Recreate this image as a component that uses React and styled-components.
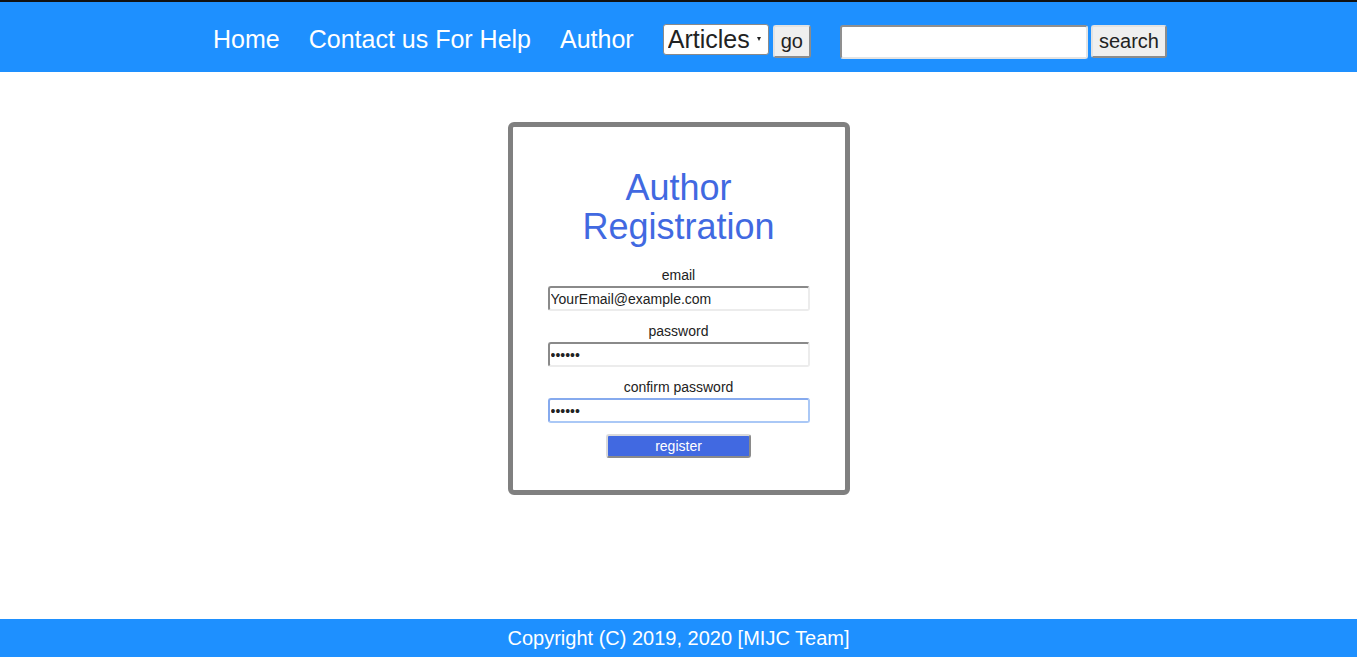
import React from "react";
import styled, { createGlobalStyle } from "styled-components";

const GlobalStyle = createGlobalStyle`
  html, body {
    margin: 0;
    padding: 0;
    background: #ffffff;
    font-family: "Liberation Sans", Arial, sans-serif;
  }
  * { box-sizing: border-box; }
`;

const Page = styled.div`
  min-height: 100vh;
  display: flex;
  flex-direction: column;
  border-top: 2px solid #111111;
`;

const NavBar = styled.nav`
  height: 70px;
  background: #1e90ff;
  display: flex;
  justify-content: center;
  align-items: baseline;
  gap: 29px;
  padding: 22px 0 0 23px;
`;

const NavLink = styled.a`
  color: #ffffff;
  font-size: 25px;
  text-decoration: none;
  cursor: pointer;
`;

const ControlGroup = styled.form`
  display: flex;
  align-items: baseline;
  gap: ${(p) => p.$gap}px;
  margin: 0;
`;

const SelectWrap = styled.span`
  position: relative;
  display: inline-block;
  &::after {
    content: "";
    position: absolute;
    right: 8px;
    top: 13px;
    border-left: 2.5px solid transparent;
    border-right: 2.5px solid transparent;
    border-top: 4px solid #222222;
    pointer-events: none;
  }
`;

const Select = styled.select`
  appearance: none;
  -webkit-appearance: none;
  width: 106px;
  height: 31px;
  padding: 0 16px 0 4px;
  border: 1px solid #8a8a8a;
  border-radius: 3px;
  background: #ffffff;
  color: #222222;
  font-family: inherit;
  font-size: 25px;
  line-height: 29px;
`;

const NavButton = styled.button`
  height: 33px;
  padding: 0 6px;
  background: #efefef;
  color: #222222;
  font-family: inherit;
  font-size: 20px;
  border: 2px solid;
  border-color: #e2e2e2 #8c8c8c #8c8c8c #e2e2e2;
  border-radius: 3px;
`;

const SearchInput = styled.input`
  width: 248px;
  height: 34px;
  border: 2px solid;
  border-color: #8f8f8f #e4e4e4 #e4e4e4 #8f8f8f;
  border-radius: 3px;
  background: #ffffff;
  font-family: inherit;
  font-size: 20px;
  padding: 0 2px;
`;

const Main = styled.main`
  flex: 1;
  display: flex;
  justify-content: center;
  align-items: flex-start;
  padding-top: 50px;
`;

const Card = styled.section`
  width: 342px;
  border: 5px solid #808080;
  border-radius: 6px;
  padding: 15px 35px 32px;
  text-align: center;
`;

const Title = styled.h1`
  margin: 26px 0 21px;
  font-size: 36px;
  line-height: 39px;
  font-weight: normal;
  color: #4169e1;
`;

const Form = styled.form`
  display: flex;
  flex-direction: column;
  margin: 0;
`;

const Field = styled.div`
  display: flex;
  flex-direction: column;
  & + & {
    margin-top: 12px;
  }
`;

const Label = styled.label`
  font-size: 14px;
  line-height: 16px;
  color: #222222;
  margin-bottom: 3px;
`;

const TextInput = styled.input`
  width: 100%;
  height: 25px;
  border: 2px solid;
  border-color: ${(p) =>
    p.$focused
      ? "#86aaee #aac8f6 #aac8f6 #86aaee"
      : "#8a8a8a #ececec #ececec #8a8a8a"};
  border-radius: 3px;
  background: #ffffff;
  color: #222222;
  font-family: inherit;
  font-size: 14px;
  padding: 0 1px;
  outline: none;
`;

const RegisterButton = styled.button`
  align-self: center;
  width: 145px;
  height: 24px;
  margin-top: 11px;
  background: #4169e1;
  color: #ffffff;
  font-family: inherit;
  font-size: 14px;
  border: 2px solid;
  border-color: #dadada #8a8a8a #8a8a8a #dadada;
  border-radius: 3px;
  padding: 0;
`;

const Footer = styled.footer`
  height: 38px;
  background: #1e90ff;
  color: #ffffff;
  font-size: 20px;
  display: flex;
  align-items: center;
  justify-content: center;
`;

export default function App() {
  return (
    <Page>
      <GlobalStyle />
      <NavBar>
        <NavLink>Home</NavLink>
        <NavLink>Contact us For Help</NavLink>
        <NavLink>Author</NavLink>
        <ControlGroup $gap={4} onSubmit={(e) => e.preventDefault()}>
          <SelectWrap>
            <Select defaultValue="articles">
              <option value="articles">Articles</option>
              <option value="authors">Authors</option>
            </Select>
          </SelectWrap>
          <NavButton type="submit">go</NavButton>
        </ControlGroup>
        <ControlGroup $gap={3} onSubmit={(e) => e.preventDefault()}>
          <SearchInput type="text" />
          <NavButton type="submit">search</NavButton>
        </ControlGroup>
      </NavBar>
      <Main>
        <Card>
          <Title>Author Registration</Title>
          <Form onSubmit={(e) => e.preventDefault()}>
            <Field>
              <Label htmlFor="email">email</Label>
              <TextInput id="email" type="text" defaultValue="YourEmail@example.com" />
            </Field>
            <Field>
              <Label htmlFor="password">password</Label>
              <TextInput id="password" type="password" defaultValue="123456" />
            </Field>
            <Field>
              <Label htmlFor="confirm">confirm password</Label>
              <TextInput id="confirm" type="password" defaultValue="123456" $focused />
            </Field>
            <RegisterButton type="submit">register</RegisterButton>
          </Form>
        </Card>
      </Main>
      <Footer>Copyright (C) 2019, 2020 [MIJC Team]</Footer>
    </Page>
  );
}
